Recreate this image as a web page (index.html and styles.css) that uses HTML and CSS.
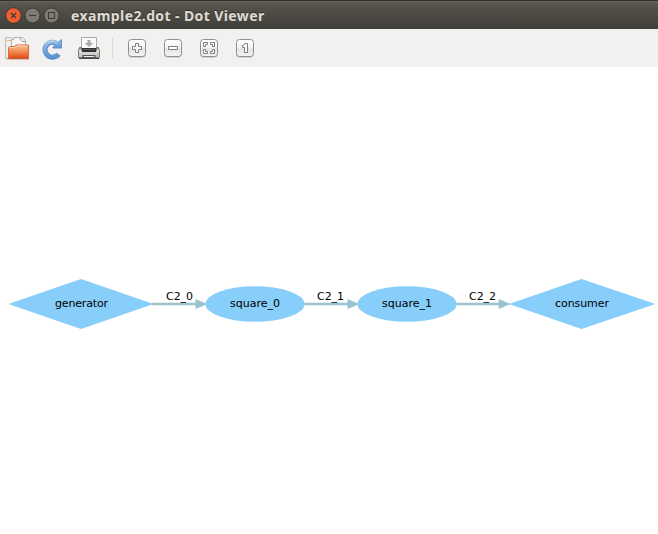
FILE: index.html
```
<!DOCTYPE html>
<html lang="en">
<head>
<meta charset="utf-8">
<title>example2.dot - Dot Viewer</title>
<link rel="stylesheet" href="styles.css">
</head>
<body>
<div class="window">
  <header class="titlebar">
    <div class="controls">
      <svg class="control" viewBox="0 0 17 17"><circle class="close" cx="8.5" cy="8.5" r="7.8"/><path d="M6 6l5 5M11 6l-5 5"/></svg>
      <svg class="control" viewBox="0 0 17 17"><circle class="plain" cx="8.5" cy="8.5" r="7.5"/><path d="M5 8.5h7"/></svg>
      <svg class="control" viewBox="0 0 17 17"><circle class="plain" cx="8.5" cy="8.5" r="7.5"/><path d="M5.5 5.5h6v6h-6z"/></svg>
    </div>
    <h1 class="title">example2.dot - Dot Viewer</h1>
  </header>
  <nav class="toolbar">
    <svg class="tool" viewBox="0 0 24 24">
      <defs>
        <linearGradient id="folder" x2="0" y2="1"><stop stop-color="#f9c193"/><stop offset=".5" stop-color="#f08a52"/><stop offset="1" stop-color="#dd4814"/></linearGradient>
        <linearGradient id="blue" x2="0" y2="1"><stop stop-color="#9cc3ea"/><stop offset="1" stop-color="#5b97d6"/></linearGradient>
        <linearGradient id="key" x2="0" y2="1"><stop stop-color="#fff"/><stop offset=".45" stop-color="#f5f5f4"/><stop offset=".55" stop-color="#e4e4e2"/><stop offset="1" stop-color="#f4f4f3"/></linearGradient>
        <linearGradient id="printer" x2="0" y2="1"><stop stop-color="#555"/><stop offset=".25" stop-color="#e2e2e2"/><stop offset="1" stop-color="#bcbcbc"/></linearGradient>
      </defs>
      <path d="M.5 22.5v-21h6l2 2v19z" fill="#eee" stroke="#bcbcba"/>
      <path d="M2 4.500h4" stroke="#f2b263"/>
      <path d="M6.500 13V3.500h2v-2h9l3 3V13z" fill="#f5f5f5" stroke="#b5b5b3"/>
      <path d="M14.500 1.500l3 4h3" fill="none" stroke="#999"/>
      <path d="M3.500 22.500V11.500l1-1h5l1.500-1.500h12.500v13.500z" fill="url(#folder)" stroke="#e0683a"/>
      <path d="M4.500 11.500h6l1.500-1.500h10.500" fill="none" stroke="#ffdcba" opacity=".8"/>
      <path d="M2 23h22" stroke="#8f3b1b" opacity=".5"/>
    </svg>
    <svg class="tool" viewBox="0 0 24 24">
      <ellipse cx="12" cy="22" rx="8" ry="1.500" fill="#bbb" opacity=".35"/>
      <path d="M17.500 18.200A7.500 7.500 0 1 1 15.500 7.300" fill="none" stroke="#5488c0" stroke-width="5"/>
      <path d="M20.500 3.500v8.500h-8.500v-1l3-2.500 2.500-2.500z" fill="url(#blue)" stroke="#5f93c9"/>
      <path d="M17 18A7.500 7.500 0 1 1 16.200 7.600" fill="none" stroke="url(#blue)" stroke-width="3.400"/>
      <path d="M4.500 8.300A8.600 8.600 0 0 1 15 5.600" fill="none" stroke="#b7d3ee"/>
    </svg>
    <svg class="tool" viewBox="0 0 24 24">
      <path d="M4.500 13V1.500h15V13z" fill="#fafafa" stroke="#aaa"/>
      <path d="M10.500 4h3v3h3L12 11 7.500 7h3z" fill="#aaa"/>
      <path d="M2.500 11.500h2v3h15v-3h2l1 3v7h-21v-7z" fill="url(#printer)" stroke="#777"/>
      <path d="M5 12h14v4H5z" fill="#303030"/>
      <path d="M6 13.500h12" stroke="#555"/>
      <path d="M5.500 19h13v3h-13z" fill="#555"/>
      <path d="M7 20.500h10" stroke="#eee"/>
      <path d="M2 22.500h20" stroke="#444"/>
      <circle cx="20.500" cy="18.500" r=".7" fill="#8fd080"/>
    </svg>
    <span class="separator"></span>
    <svg class="tool" viewBox="0 0 24 24">
      <rect class="shade" x="3.500" y="4.500" width="17" height="17" rx="3.500"/><rect class="key" x="3.500" y="3.500" width="17" height="17" rx="3"/>
      <path class="glyph" d="M10.500 7.500h3v3h3v3h-3v3h-3v-3h-3v-3h3z"/>
    </svg>
    <svg class="tool" viewBox="0 0 24 24">
      <rect class="shade" x="3.500" y="4.500" width="17" height="17" rx="3.500"/><rect class="key" x="3.500" y="3.500" width="17" height="17" rx="3"/>
      <path class="glyph" d="M7.500 10.500h9v3h-9z"/>
    </svg>
    <svg class="tool" viewBox="0 0 24 24">
      <rect class="shade" x="3.500" y="4.500" width="17" height="17" rx="3.500"/><rect class="key" x="3.500" y="3.500" width="17" height="17" rx="3"/>
      <path class="glyph" d="M6.500 6.500h4v2h-2v2h-2zM13.500 6.500h4v4h-2v-2h-2zM6.500 13.500h2v2h2v2h-4zM15.500 13.500h2v4h-4v-2h2z"/>
    </svg>
    <svg class="tool" viewBox="0 0 24 24">
      <rect class="shade" x="3.500" y="4.500" width="17" height="17" rx="3.500"/><rect class="key" x="3.500" y="3.500" width="17" height="17" rx="3"/>
      <path class="glyph" d="M12 7.500h2.500v9h-3v-5h-2v-2q2 0 2.500-2z"/>
    </svg>
  </nav>
  <main class="canvas">
    <svg class="graph" viewBox="0 67 658 467">
      <path class="node" d="M8.500 304L81 279l72.500 25L81 329z"/>
      <ellipse class="node" cx="255" cy="304" rx="49.600" ry="17.800"/>
      <ellipse class="node" cx="407" cy="304" rx="49.600" ry="17.800"/>
      <path class="node" d="M509 304l72.500-25 74 25-74 25z"/>
      <path class="edge" d="M152 304h45M304.500 304h44M456.500 304h44"/>
      <path class="arrow" d="M195.500 299l12 5-12 5zM347.500 299l12 5-12 5zM498.700 299l12 5-12 5z"/>
      <text x="55" y="307" textLength="53">generator</text>
      <text x="230" y="307" textLength="50">square_0</text>
      <text x="382" y="307" textLength="50">square_1</text>
      <text x="555" y="307" textLength="54">consumer</text>
      <text x="166" y="300" textLength="27">C2_0</text>
      <text x="317" y="300" textLength="27">C2_1</text>
      <text x="469" y="300" textLength="27">C2_2</text>
    </svg>
  </main>
</div>
</body>
</html>
```

FILE: styles.css
```
body { margin: 0; background: #fff; }
.window { display: flex; flex-direction: column; width: 658px; height: 534px; overflow: hidden; }
.titlebar {
  display: flex; align-items: center; gap: 11px; box-sizing: border-box;
  height: 29px; padding: 1px 5px 0; border-top: 1px solid #33312d;
  background: linear-gradient(#65635a, #57544c 3px, #3f3e39);
}
.controls { display: flex; gap: 2px; }
.control { width: 17px; height: 17px; }
.control path { fill: none; stroke: #3b3934; stroke-width: 1.1; }
.close { fill: #ed5f33; stroke: #393732; }
.plain { fill: #7e7b73; stroke: #393732; }
.title {
  margin: 0; color: #dfdbd2; font: bold 14px/20px "Noto Sans", sans-serif;
  white-space: nowrap; letter-spacing: .4px; text-shadow: 0 -1px #34322e;
}
.toolbar {
  display: flex; align-items: center; gap: 12px; box-sizing: border-box;
  height: 38px; padding: 0 5px; background: #f2f1f0;
}
.tool { width: 24px; height: 24px; flex: none; }
.separator { width: 1px; height: 20px; margin: 0 0 0 -1px; background: #dad8d6; }
.shade { fill: #666; opacity: .45; }
.key { fill: url(#key); stroke: #90908e; }
.glyph { fill: #fff; stroke: #7d7d7d; }
.canvas { flex: 1; }
.graph { display: block; width: 658px; height: 467px; }
.node { fill: #87cefa; }
.edge { fill: none; stroke: #9bc2cf; stroke-width: 2.3; }
.arrow { fill: #9bc2cf; }
.graph text { font: 11px "DejaVu Sans", sans-serif; fill: #000; }
```
